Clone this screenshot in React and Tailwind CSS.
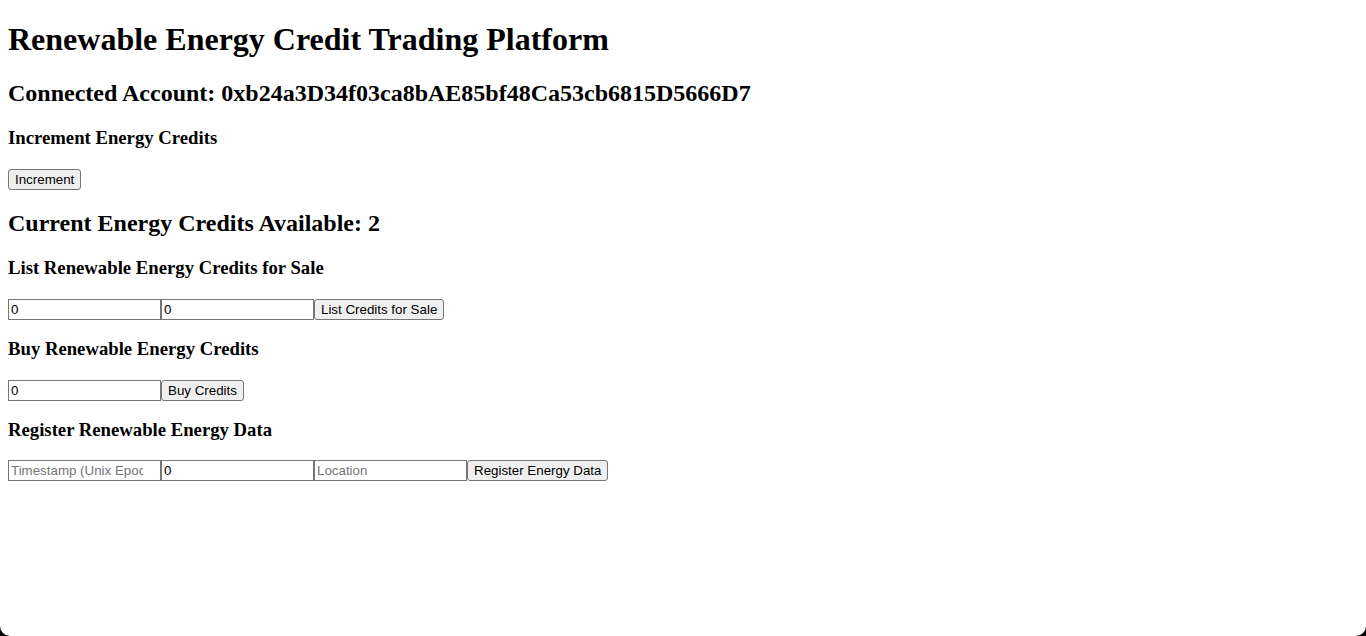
import React from 'react';

const inputCls =
  "w-[153px] h-[21px] border border-[#767676] px-[2px] py-[1px] text-[13.33px] font-['Liberation_Sans',Arial,sans-serif] text-black bg-white placeholder:text-[#757575] outline-none";
const btnCls =
  "h-[21px] border border-[#767676] bg-[#efefef] rounded-[3px] px-[6px] py-[1px] text-[13.33px] leading-[normal] font-['Liberation_Sans',Arial,sans-serif] text-black";

export default function App() {
  return (
    <div className="bg-black h-[636px] w-full">
      <div className="flow-root h-full bg-white rounded-b-[10px] px-2 font-['Liberation_Serif','Times_New_Roman',serif] text-black leading-[normal]">
        <h1 className="text-[32px] font-bold my-[21.44px]">Renewable Energy Credit Trading Platform</h1>
        <h2 className="text-[24px] font-bold mt-[20.5px] mb-[19.92px]">
          Connected Account: 0xb24a3D34f03ca8bAE85bf48Ca53cb6815D5666D7
        </h2>

        <h3 className="text-[18.72px] font-bold my-[18.72px]">Increment Energy Credits</h3>
        <div className="flex py-[1px]">
          <button className={btnCls}>Increment</button>
        </div>

        <h2 className="text-[24px] font-bold my-[19.92px]">Current Energy Credits Available: 2</h2>

        <h3 className="text-[18.72px] font-bold my-[18.72px]">List Renewable Energy Credits for Sale</h3>
        <div className="flex pt-[1px]">
          <input className={inputCls} defaultValue="0" />
          <input className={inputCls} defaultValue="0" />
          <button className={btnCls}>List Credits for Sale</button>
        </div>

        <h3 className="text-[18.72px] font-bold mt-[18px] mb-[18.72px]">Buy Renewable Energy Credits</h3>
        <div className="flex pt-[1px]">
          <input className={inputCls} defaultValue="0" />
          <button className={btnCls}>Buy Credits</button>
        </div>

        <h3 className="text-[18.72px] font-bold mt-[18px] mb-[18.72px]">Register Renewable Energy Data</h3>
        <div className="flex pt-[1px]">
          <input className={`${inputCls} pr-[17px]`} placeholder="Timestamp (Unix Epoch)" />
          <input className={inputCls} defaultValue="0" />
          <input className={inputCls} placeholder="Location" />
          <button className={btnCls}>Register Energy Data</button>
        </div>
      </div>
    </div>
  );
}
